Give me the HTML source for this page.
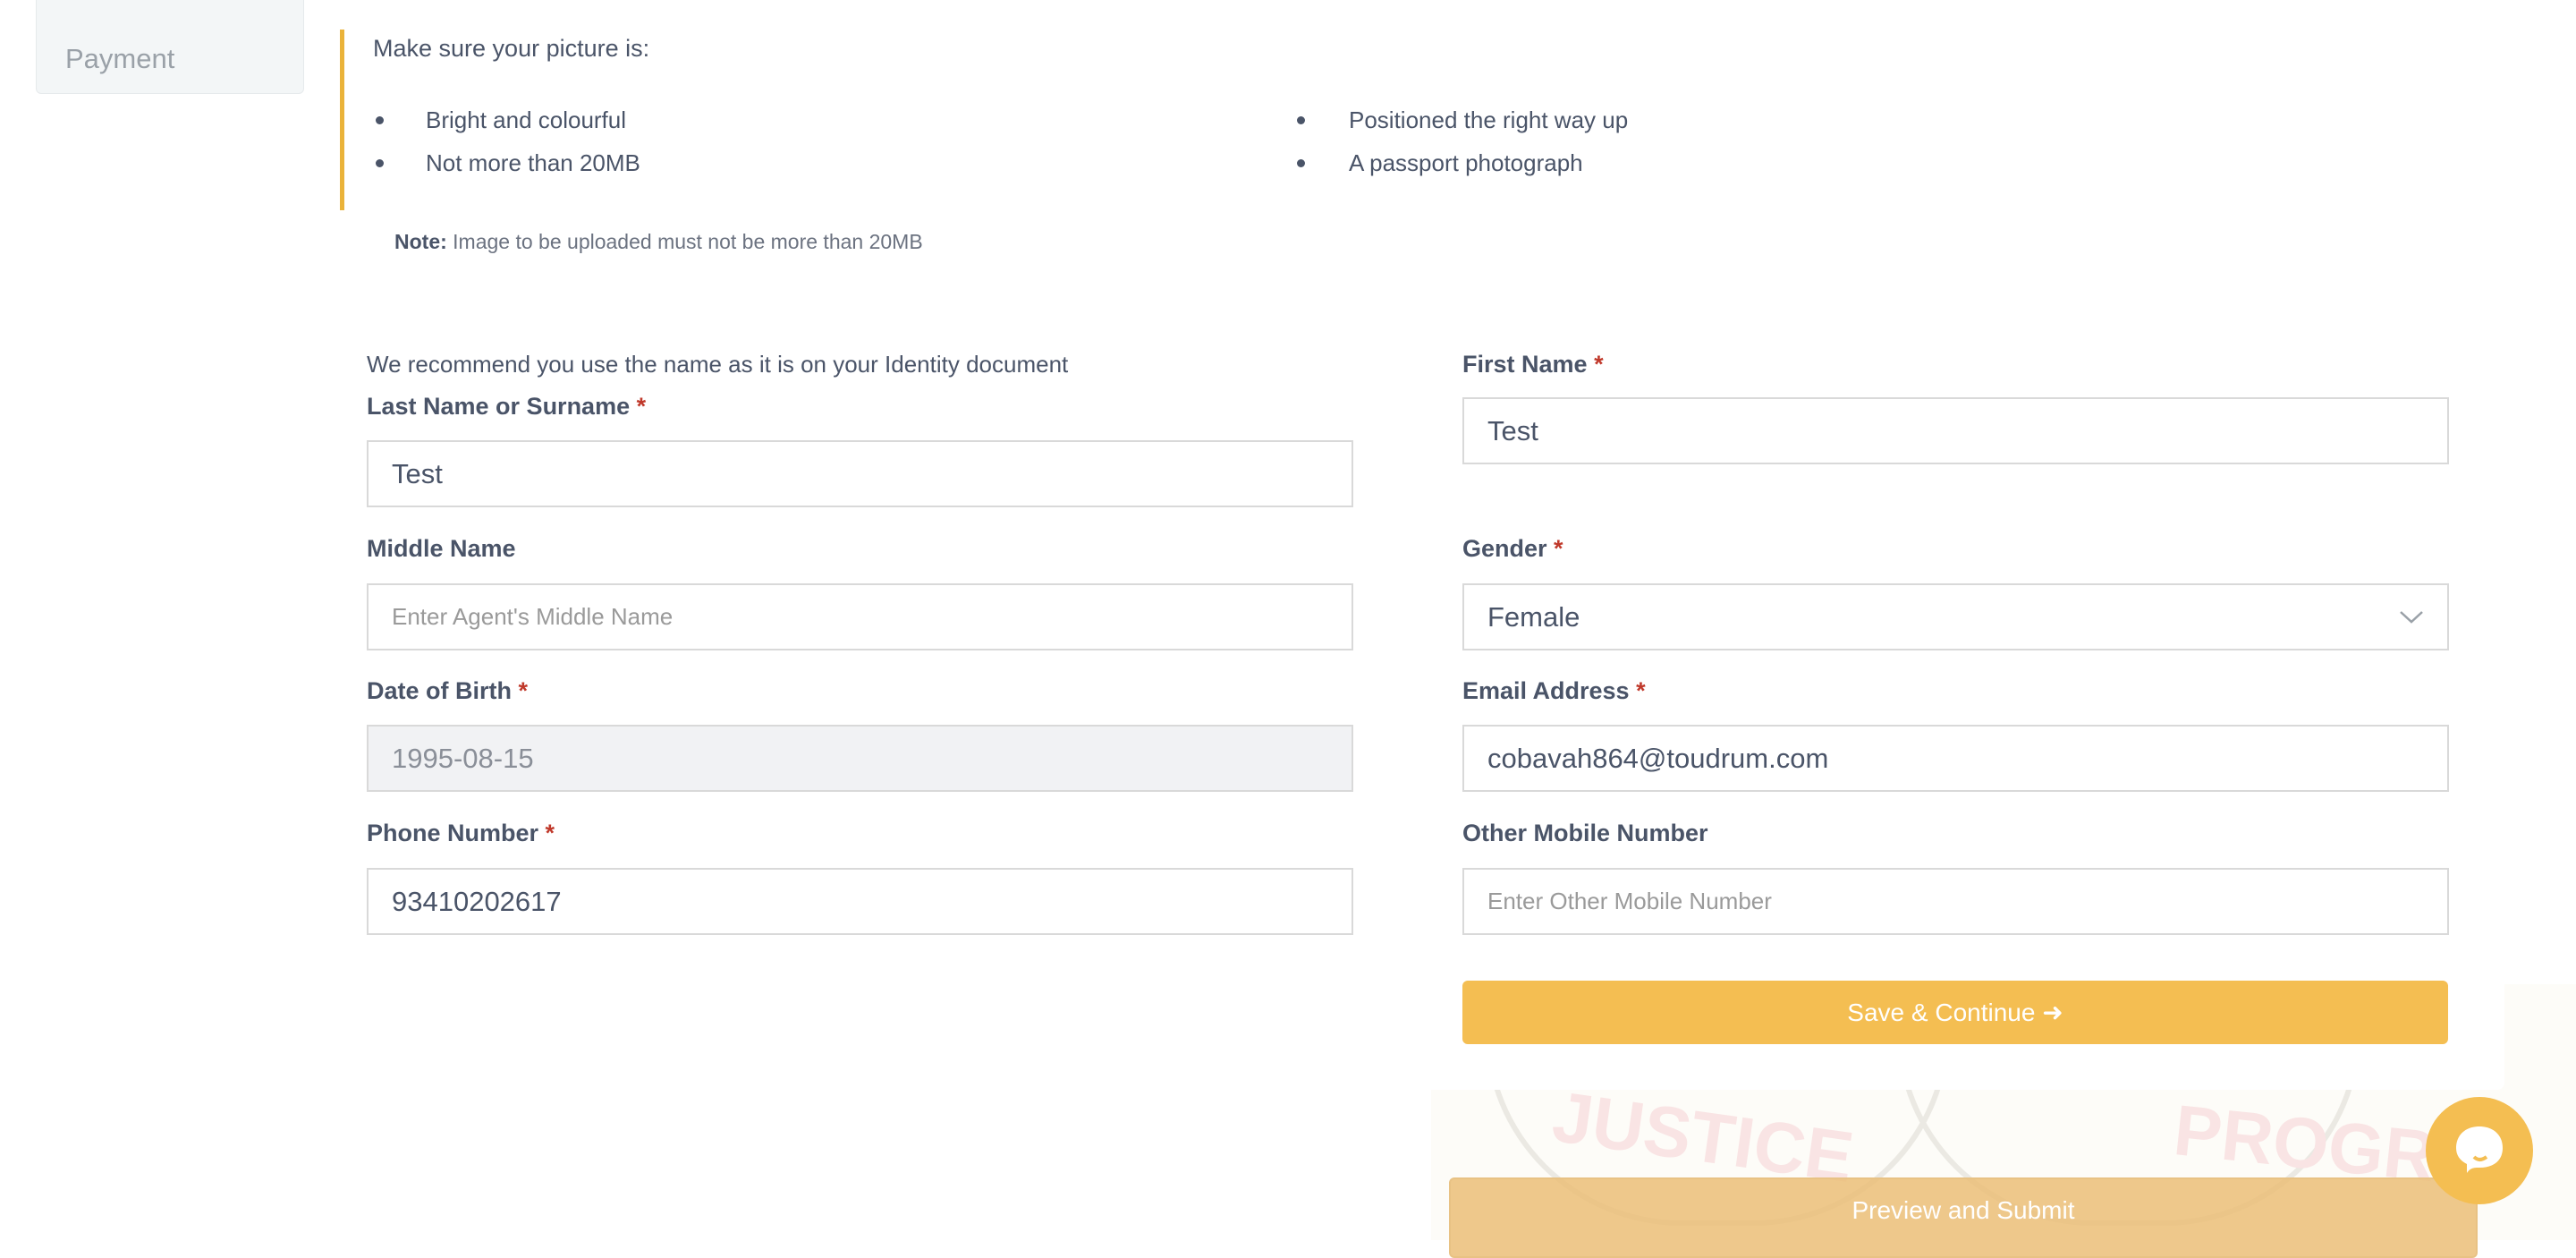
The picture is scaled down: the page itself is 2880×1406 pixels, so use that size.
<!DOCTYPE html>
<html><head><meta charset="utf-8"><style>
*{box-sizing:border-box;margin:0;padding:0}
body{width:2880px;height:1386px;overflow:hidden;background:#fff;font-family:"Liberation Sans",sans-serif;color:#4a5468;position:relative}
.abs{position:absolute}
.side{left:40px;top:-10px;width:300px;height:115px;background:#f3f6f7;border:1px solid #e6eaec;border-radius:6px}
.side span{position:absolute;left:32px;top:57px;font-size:31px;color:#9aa1a8}
.bar{left:380px;top:33px;width:5px;height:202px;background:#eab33a}
.t{font-size:26px;color:#4a5468;white-space:nowrap}
.lbl{font-size:27px;font-weight:bold;color:#4a5468;white-space:nowrap}
.lbl b{color:#c0392b}
.inp{width:1103px;height:75px;border:2px solid #d9d9d9;background:#fff;font-size:31px;color:#4a5468;padding:0 26px;line-height:71px;white-space:nowrap}
.ph{font-size:26px;color:#9a9a9a}
.dot{width:9px;height:9px;border-radius:50%;background:#4a5468}
</style></head><body>
<div class="abs" style="left:1600px;top:1100px;width:1280px;height:286px;background:#fdfcf8"></div>
<div class="abs" style="left:1660px;top:1150px;width:520px;height:220px;border:6px solid #ebe9e3;border-radius:0 0 260px 260px"></div>
<div class="abs" style="left:2120px;top:1150px;width:520px;height:220px;border:6px solid #ebe9e3;border-radius:0 0 260px 260px"></div>
<div class="abs" style="left:1735px;top:1225px;font-size:80px;font-weight:bold;color:#f9e4e4;transform:rotate(8deg)">JUSTICE</div>
<div class="abs" style="left:2430px;top:1235px;font-size:80px;font-weight:bold;color:#f9e4e4;transform:rotate(6deg)">PROGRE</div>
<div class="abs" style="left:0;top:0;width:2800px;height:1218px;background:#fff;border-radius:0 0 8px 0"></div>

<div class="abs side"><span>Payment</span></div>
<div class="abs bar"></div>
<div class="abs t" style="left:417px;top:39px;font-size:27px">Make sure your picture is:</div>
<div class="abs dot" style="left:420px;top:130px"></div>
<div class="abs dot" style="left:420px;top:178px"></div>
<div class="abs t" style="left:476px;top:119px">Bright and colourful</div>
<div class="abs t" style="left:476px;top:167px">Not more than 20MB</div>
<div class="abs dot" style="left:1450px;top:130px"></div>
<div class="abs dot" style="left:1450px;top:178px"></div>
<div class="abs t" style="left:1508px;top:119px">Positioned the right way up</div>
<div class="abs t" style="left:1508px;top:167px">A passport photograph</div>
<div class="abs t" style="left:441px;top:257px;font-size:23px;color:#6b7280"><b style="color:#4a5468">Note:</b> Image to be uploaded must not be more than 20MB</div>

<div class="abs t" style="left:410px;top:392px">We recommend you use the name as it is on your Identity document</div>
<div class="abs lbl" style="left:410px;top:439px">Last Name or Surname <b>*</b></div>
<div class="abs inp" style="left:410px;top:492px">Test</div>
<div class="abs lbl" style="left:410px;top:598px">Middle Name</div>
<div class="abs inp ph" style="left:410px;top:652px">Enter Agent's Middle Name</div>
<div class="abs lbl" style="left:410px;top:757px">Date of Birth <b>*</b></div>
<div class="abs inp" style="left:410px;top:810px;background:#f1f2f4;color:#8a8f98">1995-08-15</div>
<div class="abs lbl" style="left:410px;top:916px">Phone Number <b>*</b></div>
<div class="abs inp" style="left:410px;top:970px">93410202617</div>

<div class="abs lbl" style="left:1635px;top:392px">First Name <b>*</b></div>
<div class="abs inp" style="left:1635px;top:444px">Test</div>
<div class="abs lbl" style="left:1635px;top:598px">Gender <b>*</b></div>
<div class="abs inp" style="left:1635px;top:652px">Female
<svg class="abs" style="right:26px;top:28px" width="28" height="16" viewBox="0 0 28 16"><path d="M2 2L14 13L26 2" fill="none" stroke="#9aa1a8" stroke-width="2.5"/></svg></div>
<div class="abs lbl" style="left:1635px;top:757px">Email Address <b>*</b></div>
<div class="abs inp" style="left:1635px;top:810px">cobavah864@toudrum.com</div>
<div class="abs lbl" style="left:1635px;top:916px">Other Mobile Number</div>
<div class="abs inp ph" style="left:1635px;top:970px">Enter Other Mobile Number</div>

<div class="abs" style="left:1635px;top:1096px;width:1102px;height:71px;background:#f4be52;border-radius:6px;color:#fff;font-size:28px;text-align:center;line-height:71px">Save &amp; Continue &#10140;</div>
<div class="abs" style="left:1620px;top:1316px;width:1150px;height:90px;background:rgba(235,190,120,0.85);border:2px solid #e8c284;border-radius:6px;color:#fff;font-size:28px;text-align:center;line-height:70px">Preview and Submit</div>

<div class="abs" style="left:2712px;top:1226px;width:120px;height:120px;border-radius:50%;background:#f4be52"></div>
<svg class="abs" style="left:2740px;top:1255px" width="64" height="66" viewBox="0 0 64 66"><path d="M32 4C48 4 58 14 58 28C58 42 48 50 32 50C26 50 22 50 18 56L18 46C10 42 6 36 6 28C6 14 16 4 32 4Z" fill="#fff"/><path d="M26 38Q32 44 40 38" fill="none" stroke="#f4be52" stroke-width="4"/></svg>
</body></html>
